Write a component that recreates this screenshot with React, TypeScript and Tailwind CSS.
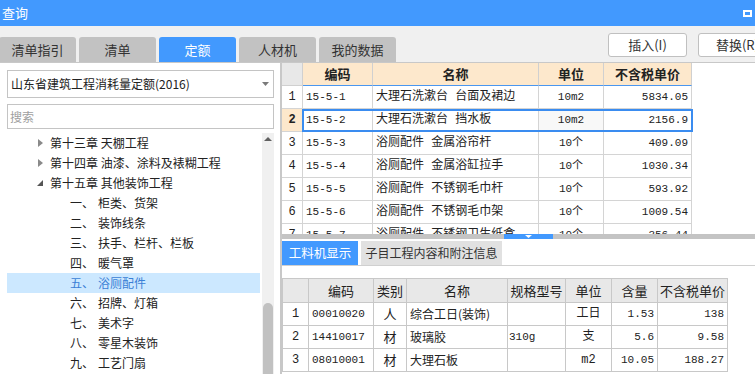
import { useState } from 'react'

const cjk = "font-['Noto_Sans_CJK_SC',sans-serif]"
const mono = "font-['Liberation_Mono','Noto_Sans_CJK_SC',monospace]"

const topTabs = ['清单指引', '清单', '定额', '人材机', '我的数据']

const chapters = [
  { label: '第十三章 天棚工程', open: false },
  { label: '第十四章 油漆、涂料及裱糊工程', open: false },
  { label: '第十五章 其他装饰工程', open: true },
]

const sections = [
  ['一、', '柜类、货架'],
  ['二、', '装饰线条'],
  ['三、', '扶手、栏杆、栏板'],
  ['四、', '暖气罩'],
  ['五、', '浴厕配件'],
  ['六、', '招牌、灯箱'],
  ['七、', '美术字'],
  ['八、', '零星木装饰'],
  ['九、', '工艺门扇'],
]

const quotaRows = [
  { no: 1, code: '15-5-1', name: '大理石洗漱台 台面及裙边', unit: '10m2', price: '5834.05' },
  { no: 2, code: '15-5-2', name: '大理石洗漱台 挡水板', unit: '10m2', price: '2156.9' },
  { no: 3, code: '15-5-3', name: '浴厕配件 金属浴帘杆', unit: '10个', price: '409.09' },
  { no: 4, code: '15-5-4', name: '浴厕配件 金属浴缸拉手', unit: '10个', price: '1030.34' },
  { no: 5, code: '15-5-5', name: '浴厕配件 不锈钢毛巾杆', unit: '10个', price: '593.92' },
  { no: 6, code: '15-5-6', name: '浴厕配件 不锈钢毛巾架', unit: '10个', price: '1009.54' },
  { no: 7, code: '15-5-7', name: '浴厕配件 不锈钢卫生纸盒', unit: '10个', price: '356.44' },
]

const resRows = [
  { no: 1, code: '00010020', kind: '人', name: '综合工日(装饰)', spec: '', unit: '工日', qty: '1.53', price: '138' },
  { no: 2, code: '14410017', kind: '材', name: '玻璃胶', spec: '310g', unit: '支', qty: '5.6', price: '9.58' },
  { no: 3, code: '08010001', kind: '材', name: '大理石板', spec: '', unit: 'm2', qty: '10.05', price: '188.27' },
]

const Toolbar = () => (
  <div className="flex h-[37px] shrink-0 border-b border-[#c8c8c8] bg-[#f0f0f0]">
    <div className="ml-[-1px] flex items-end gap-[3px]">
      {topTabs.map((t) => (
        <div
          key={t}
          className={`flex h-[25px] w-[77px] items-center justify-center rounded-t-[3px] text-[13px] ${
            t === '定额' ? 'bg-[#4299fe] text-white' : 'bg-[#c2c2c2] text-[#333]'
          }`}
        >
          {t}
        </div>
      ))}
    </div>
    <div className="ml-[212px] flex shrink-0 gap-[11px] pt-[7px]">
      <button className="h-[24px] w-[79px] shrink-0 rounded-[3px] border border-[#c0c0c0] bg-white text-[13px] text-[#333]">插入(I)</button>
      <button className="h-[24px] w-[79px] shrink-0 rounded-[3px] border border-[#c0c0c0] bg-white text-[13px] text-[#333]">替换(R)</button>
    </div>
  </div>
)

const LeftPanel = () => (
  <div className="flex w-[280px] shrink-0 flex-col bg-white pl-[7px] pr-[6px] pt-[7px]">
    <div className="flex h-[28px] items-center justify-between border border-[#c4c4c4] pl-[3px] pr-[4px] text-[12px] text-[#222]">
      <span>山东省建筑工程消耗量定额(2016)</span>
      <svg width="7" height="4" viewBox="0 0 7 4"><path d="M0 0h7L3.5 4z" fill="#7a7a7a" /></svg>
    </div>
    <div className="mt-[6px] flex h-[25px] items-center border border-[#c4c4c4] pl-[2px] text-[12px] text-[#a0a0a0]">搜索</div>
    <div className="mt-[4px] flex min-h-0 flex-1">
      <div className="w-[253px] text-[12px] text-[#222]">
        {chapters.map((c) => (
          <div key={c.label} className="flex h-[20px] items-center">
            <span className="flex w-[43px] justify-end pr-[7px]">
              {c.open ? (
                <svg width="6" height="6" viewBox="0 0 6 6"><path d="M6 0v6H0z" fill="#555" /></svg>
              ) : (
                <svg width="5" height="8" viewBox="0 0 5 8"><path d="M0 0l5 4-5 4z" fill="#8a8a8a" /></svg>
              )}
            </span>
            <span>{c.label}</span>
          </div>
        ))}
        {sections.map(([n, s]) => (
          <div
            key={s}
            className={`flex h-[20px] items-center pl-[63px] ${s === '浴厕配件' ? 'bg-[#cce8ff] text-[#3a7fd6]' : ''}`}
          >
            <span className="w-[28px]">{n}</span>
            <span>{s}</span>
          </div>
        ))}
      </div>
      <div className="ml-[2px] flex w-[12px] flex-col bg-[#f0f0f0]">
        <div className="flex h-[12px] items-center justify-center">
          <svg width="8" height="4" viewBox="0 0 8 4"><path d="M4 0l4 4H0z" fill="#606060" /></svg>
        </div>
        <div className="flex-1" />
        <div className="mx-[1px] h-[71px] rounded-t-[5px] bg-[#c1c1c1]" />
      </div>
    </div>
  </div>
)

const QuotaTable = () => (
  <div className="h-[171px] shrink-0 overflow-hidden bg-white text-[#222]">
    <div className="flex h-[23px]">
      <div className="w-[21px] border-r border-b border-[#d0d0d0] bg-[#e8e8e8]" />
      <div className="flex w-[70px] items-center justify-center border-r border-b border-r-[#d0d0d0] border-b-[#4a97f0] bg-[#fde8cc] text-[13px] font-bold">编码</div>
      <div className="flex w-[166px] items-center justify-center border-r border-b border-r-[#d0d0d0] border-b-[#4a97f0] bg-[#fde8cc] text-[13px] font-bold">名称</div>
      <div className="flex w-[65px] items-center justify-center border-r border-b border-r-[#d0d0d0] border-b-[#4a97f0] bg-[#fde8cc] text-[13px] font-bold">单位</div>
      <div className="flex w-[88px] items-center justify-center border-r border-b border-r-[#d0d0d0] border-b-[#4a97f0] bg-[#fde8cc] text-[13px] font-bold">不含税单价</div>
    </div>
    {quotaRows.map((r) => {
      const sel = r.no === 2
      return (
        <div key={r.no} className="relative flex h-[23px]">
          <div className={`flex w-[21px] items-center justify-center border-r border-b border-[#d4d4d4] ${mono} text-[12px] ${sel ? 'bg-[#fde8cc] font-bold' : ''}`}>{r.no}</div>
          <div className={`flex w-[70px] items-center border-r border-b border-[#d4d4d4] pl-[3px] ${mono} text-[11px]`}>{r.code}</div>
          <div className={`flex w-[166px] items-center whitespace-pre border-r border-b border-[#d4d4d4] pl-[3px] ${mono} text-[12px]`}>{r.name}</div>
          <div className={`flex w-[65px] items-center justify-center border-r border-b border-[#d4d4d4] ${mono} text-[11px] ${sel ? 'bg-[#f8f8f8]' : ''}`}>{r.unit}</div>
          <div className={`flex w-[88px] items-center justify-end border-r border-b border-[#d4d4d4] pr-[3px] ${mono} text-[11px]`}>{r.price}</div>
          {sel && <div className="pointer-events-none absolute left-[20px] top-0 h-[23px] w-[391px] border-2 border-[#3a8cf0]" />}
        </div>
      )
    })}
  </div>
)

const Splitter = () => (
  <div className="flex h-[5px] shrink-0 bg-[#c4c4c4]">
    <div className="ml-[222px] flex w-[49px] justify-center bg-[#4299fe] pt-[1px]">
      <svg width="7" height="3" viewBox="0 0 7 3"><path d="M0 0h7L3.5 3z" fill="#fff" /></svg>
    </div>
  </div>
)

const ResourcePanel = () => {
  const [tab, setTab] = useState(0)
  const cell = 'flex items-center border-r border-b border-[#c8c8c8]'
  return (
    <div className="flex min-h-0 flex-1 flex-col bg-white">
      <div className="flex h-[27px] shrink-0 items-end gap-[3px] border-b border-[#d0d0d0]">
        {['工料机显示', '子目工程内容和附注信息'].map((t, i) => (
          <div
            key={t}
            onClick={() => setTab(i)}
            className={`flex h-[24px] items-center justify-center whitespace-nowrap ${
              i === 0 ? 'w-[76px] text-[12.5px]' : 'w-[141px] text-[12px]'
            } ${tab === i ? 'bg-[#4299fe] text-white' : 'bg-[#e1e1e1] text-[#333]'}`}
          >
            {t}
          </div>
        ))}
      </div>
      <div className="pt-[12px]">
        <div className="w-[446px] border-t border-l border-[#c8c8c8] text-[#222]">
          <div className="flex h-[24px] bg-[#e8e8e8] text-[13px]">
            <div className={`${cell} w-[26px]`} />
            <div className={`${cell} w-[65px] justify-center`}>编码</div>
            <div className={`${cell} w-[33px] justify-center`}>类别</div>
            <div className={`${cell} w-[101px] justify-center`}>名称</div>
            <div className={`${cell} w-[58px] justify-center`}>规格型号</div>
            <div className={`${cell} w-[46px] justify-center`}>单位</div>
            <div className={`${cell} w-[46px] justify-center`}>含量</div>
            <div className={`${cell} w-[70px] justify-center`}>不含税单价</div>
          </div>
          {resRows.map((r) => (
            <div key={r.no} className="flex h-[23px]">
              <div className={`${cell} w-[26px] justify-center ${mono} text-[12px]`}>{r.no}</div>
              <div className={`${cell} w-[65px] pl-[3px] ${mono} text-[11px]`}>{r.code}</div>
              <div className={`${cell} w-[33px] justify-center text-[13px]`}>{r.kind}</div>
              <div className={`${cell} w-[101px] pl-[3px] text-[12px]`}>{r.name}</div>
              <div className={`${cell} w-[58px] pl-[1px] ${mono} text-[11px]`}>{r.spec}</div>
              <div className={`${cell} w-[46px] justify-center ${mono} text-[12px]`}>{r.unit}</div>
              <div className={`${cell} w-[46px] justify-end pr-[3px] ${mono} text-[11px]`}>{r.qty}</div>
              <div className={`${cell} w-[70px] justify-end pr-[3px] ${mono} text-[11px]`}>{r.price}</div>
            </div>
          ))}
        </div>
      </div>
    </div>
  )
}

export default function App() {
  return (
    <div className={`flex h-[374px] w-[755px] flex-col overflow-hidden bg-[#f0f0f0] ${cjk}`}>
      <div className="flex h-[26px] shrink-0 items-center justify-between bg-[#4299fe] pl-[2px] pr-[3px] text-[13px] text-white">
        <span>查询</span>
        <div className="h-[7px] w-[9px] border-2 border-white" />
      </div>
      <Toolbar />
      <div className="flex min-h-0 flex-1">
        <LeftPanel />
        <div className="w-[2px] shrink-0 bg-[#c8c8c8]" />
        <div className="flex min-w-0 flex-1 flex-col bg-white">
          <QuotaTable />
          <Splitter />
          <ResourcePanel />
        </div>
      </div>
    </div>
  )
}
